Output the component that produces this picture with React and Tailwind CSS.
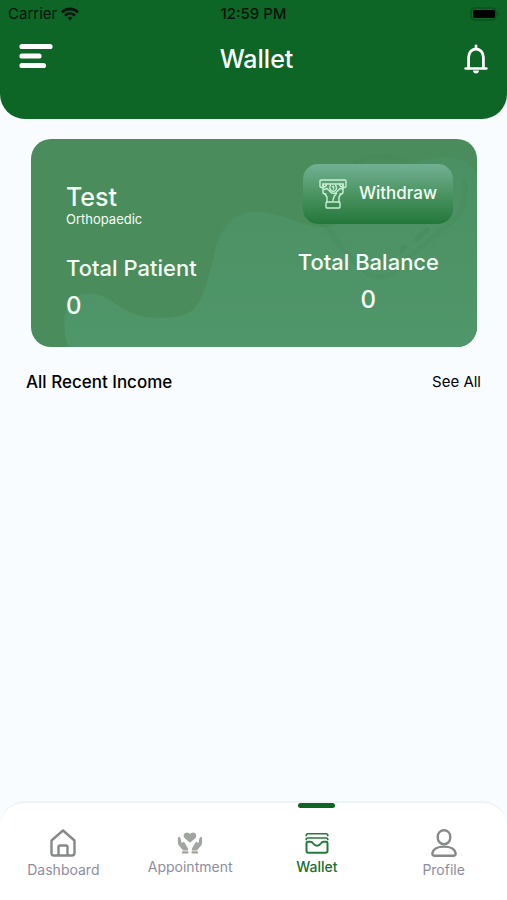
import React from "react";

function WifiIcon() {
  return (
    <svg viewBox="0 0 18 14" className="h-[14px] w-[18px]" fill="none" stroke="#04140a" strokeWidth="2.6" aria-hidden="true">
      <path d="M1 5.200C5.600.8 12.400.8 17 5.200" />
      <path d="M4 8.500c2.900-2.700 7.100-2.700 10 0" />
      <path d="M6.500 10.700c1.500-1.300 3.500-1.300 5 0L9 13.600z" fill="#04140a" stroke="none" />
    </svg>
  );
}

function BatteryIcon() {
  return (
    <svg viewBox="0 0 30 14" className="h-[14px] w-[30px]" aria-hidden="true">
      <rect x="2" y="1" width="25" height="12" rx="4" fill="none" stroke="#094b1a" strokeWidth="1.200" />
      <rect x="4" y="3" width="22" height="8" rx="1.500" fill="#000" />
      <path d="M28.500 5c1.400.5 1.400 3.500 0 4z" fill="#094b1a" />
    </svg>
  );
}

function MenuIcon() {
  return (
    <svg viewBox="0 0 34 26" className="h-[26px] w-[34px]" fill="none" stroke="#fff" strokeWidth="5.200" strokeLinecap="round" aria-hidden="true">
      <path d="M3 3.500h28M3 13h17M3 22.500h21.500" />
    </svg>
  );
}

function BellIcon() {
  return (
    <svg viewBox="0 0 24 30" className="h-[30px] w-[24px]" aria-hidden="true">
      <path d="M12 2v2.500M4.600 24V13.300C4.600 8.200 8 5 12 5s7.400 3.200 7.400 8.300V24" fill="none" stroke="#fff" strokeWidth="2.800" strokeLinecap="round" />
      <path d="M1.500 24.500h21" stroke="#fff" strokeWidth="2.400" strokeLinecap="round" />
      <path d="M9 26.600h6c0 3.800-6 3.800-6 0z" fill="#fff" />
    </svg>
  );
}

function CashIcon() {
  return (
    <svg viewBox="0 0 28 30" className="h-[30px] w-[28px]" fill="none" stroke="#c9efd3" strokeWidth="1.400" strokeLinejoin="round" strokeLinecap="round" aria-hidden="true">
      <path d="M2 1h24q1 0 1 1v5q0 1.500-1.500 1.500H24V5H4v3.500H2.500Q1 8.500 1 7V2q0-1 1-1z" />
      <path d="M4 5v8q0 2 2 2h1M24 5v8q0 2-2 2h-1M7.500 5Q7.500 7.500 5 8M20.500 5q0 2.500 2.500 3" />
      <path d="M11.500 6c-1.500 3-.5 5.500 2.500 6.500 3.500-.5 4.500-3.500 2.500-6.500M5 10.500l3-1 4.500 4.500 5 .5-2.500 3-1 4M24 10l-3-.5-4 4M13.500 7.500h1v2.500" />
      <path d="M6 15l2 3v5M22 15l-2 3v5" />
      <rect x="7" y="23" width="14" height="6" rx="1" />
    </svg>
  );
}

function CardArtwork() {
  return (
    <svg viewBox="0 0 446 208" preserveAspectRatio="none" className="absolute inset-0 h-full w-full" aria-hidden="true">
      <defs>
        <linearGradient id="wave" x1="0" y1="0" x2="0" y2="1">
          <stop offset="0" stopColor="#4b9062" />
          <stop offset="1" stopColor="#4f966a" />
        </linearGradient>
      </defs>
      <path d="M37 208c-7-26-5-48 15-53 22-4 31 13 52 20 16 6 30 4 46 2 21-5 25-31 33-60 6-28 19-44 42-44 29 0 42 15 68 15 46 0 58-70 122-70 16 0 26 8 31 18v172z" fill="url(#wave)" />
      <g fill="none" stroke="#3d8153" strokeLinecap="round">
        <path d="M291 85c12 8 17 24 31 36 8 8 16 16 27 17 10 0 14-5 20-12l55-46c10-10 12-24 9-38M324 25c8-9 35-9 48-4" strokeOpacity=".16" strokeWidth="5" />
        <path d="M371 111l3-3M386 100l10-9" strokeOpacity=".26" strokeWidth="5" />
      </g>
    </svg>
  );
}

function HomeIcon() {
  return (
    <svg viewBox="0 0 26 28" className="h-[28px] w-[26px]" fill="none" stroke="#858988" strokeWidth="2.400" strokeLinejoin="round" aria-hidden="true">
      <path d="M1.500 11.500L13 1.500l11.500 10V24q0 2.500-2.500 2.500H4Q1.500 26.500 1.500 24z" />
      <path d="M8.500 26v-8q0-1.500 1.500-1.500h6q1.500 0 1.500 1.500v8" />
    </svg>
  );
}

function CareIcon() {
  return (
    <svg viewBox="0 0 26 22" className="h-[22px] w-[26px]" fill="#a0a5a0" aria-hidden="true">
      <path d="M13 10.800L7.500 6C5.500 3.500 7.500.5 10 .5q2 0 3 1.500Q14 .5 16 .5c2.500 0 4.500 3 2.500 5.500z" />
      <path d="M1 5.200q1.600-.8 2.500 1l1.200 5 1-1q1.500-.4 2.200 1l2.600 4.300q1 1.500.5 3H6.200L1.500 13Q.5 11 1 5.200zM25 5.200q-1.600-.8-2.500 1l-1.200 5-1-1q-1.500-.4-2.200 1l-2.600 4.300q-1 1.500-.5 3h4.800l4.700-5.500q1-2 .5-7.800z" />
      <rect x="5" y="19.200" width="6.500" height="2.400" rx=".7" />
      <rect x="14.500" y="19.200" width="6.500" height="2.400" rx=".7" />
    </svg>
  );
}

function WalletIcon() {
  return (
    <svg viewBox="0 0 24 22" className="h-[22px] w-[24px]" fill="none" stroke="#24793b" strokeLinejoin="round" aria-hidden="true">
      <path d="M1.200 4.200V3.500q0-1.700 1.800-1.700h18q1.800 0 1.800 1.700v.7M1.200 8.200v-.6Q1.200 6 3 6h18q1.800 0 1.800 1.600v.6" strokeWidth="1.600" />
      <path d="M1.500 11q0-1.300 1.300-1.300h2.700q1.500 0 2.200 1.300 4.300 5.600 8.600 0 .7-1.300 2.200-1.300h2.700q1.300 0 1.300 1.300v8q0 1.800-2 1.800h-17q-2 0-2-1.800z" strokeWidth="2" />
    </svg>
  );
}

function ProfileIcon() {
  return (
    <svg viewBox="0 0 26 28" className="h-[28px] w-[26px]" fill="none" stroke="#858988" strokeWidth="2.400" aria-hidden="true">
      <rect x="6.800" y="1.200" width="12.400" height="14" rx="6.200" />
      <path d="M3.800 26.800Q1.200 26.800 1.400 24.500C2 20 7 17.600 13 17.600s11 2.400 11.600 6.900q.2 2.300-2.400 2.300z" />
    </svg>
  );
}

const tabs = [
  { label: "Dashboard", Icon: HomeIcon, active: false },
  { label: "Appointment", Icon: CareIcon, active: false },
  { label: "Wallet", Icon: WalletIcon, active: true },
  { label: "Profile", Icon: ProfileIcon, active: false },
];

export default function App() {
  return (
    <div className="flex min-h-screen flex-col bg-[#f8fcff] font-['Inter','Liberation_Sans',sans-serif] text-black">
      <header className="rounded-b-[25px] bg-[#0d6625] pb-10">
        <div className="grid h-7 grid-cols-3 items-center px-2 text-[15px] leading-5 text-[#04140a]">
          <div className="flex items-center gap-1">
            <span>Carrier</span>
            <WifiIcon />
          </div>
          <span className="text-center font-medium whitespace-nowrap">12:59 PM</span>
          <div className="flex justify-end">
            <BatteryIcon />
          </div>
        </div>
        <div className="mt-[11px] grid grid-cols-[34px_1fr_28px] items-center px-[19px] text-white">
          <button type="button" aria-label="Menu" className="pb-1.5"><MenuIcon /></button>
          <h1 className="text-center text-[25px] leading-10 font-medium">Wallet</h1>
          <button type="button" aria-label="Notifications" className="flex justify-end"><BellIcon /></button>
        </div>
      </header>

      <main className="flex-1">
        <section className="relative mr-[30px] ml-[31px] mt-5 overflow-hidden rounded-[20px] bg-[#4a8c5b] text-[#f5fff5]">
          <CardArtwork />
          <div className="relative flex justify-between pt-[25px] pr-6 pb-[25px] pl-[35px]">
            <div className="flex flex-col pt-[19px]">
              <h2 className="text-[25px] leading-7 font-medium">Test</h2>
              <p className="text-[13px] leading-4">Orthopaedic</p>
              <p className="mt-[27px] text-[22px] leading-7 font-medium">Total Patient</p>
              <p className="mt-2 text-2xl leading-8 font-medium">0</p>
            </div>
            <div className="flex flex-col items-end">
              <button type="button" className="flex h-[60px] w-[150px] items-center justify-center gap-3 rounded-[15px] bg-linear-to-b from-[#72b093] via-[#4a9462] to-[#22773a] text-[17px] font-medium">
                <CashIcon />
                Withdraw
              </button>
              <div className="mt-6 flex flex-col items-center pr-[14px]">
                <p className="text-[22px] leading-7 font-medium">Total Balance</p>
                <p className="mt-2 text-2xl leading-8 font-medium">0</p>
              </div>
            </div>
          </div>
        </section>

        <div className="mt-[19px] flex items-center justify-between px-[26px]">
          <h2 className="text-[17px] leading-8 font-medium">All Recent Income</h2>
          <a href="#all" className="text-[15px] leading-8">See All</a>
        </div>
      </main>

      <nav className="grid h-[99px] grid-cols-4 rounded-t-[25px] border-t-2 border-[#eff3f4] bg-white">
        {tabs.map(({ label, Icon, active }) => (
          <button
            key={label}
            type="button"
            aria-current={active ? "page" : undefined}
            className={`relative flex flex-col items-center justify-center gap-[3px] pt-1.5 text-[14px] leading-5 ${active ? "font-medium text-[#176f30]" : "text-[#8e8d9f]"}`}
          >
            {active && <span className="absolute top-0 h-[5px] w-[37px] rounded-full bg-[#0d6625]" />}
            <Icon />
            <span>{label}</span>
          </button>
        ))}
      </nav>
    </div>
  );
}
